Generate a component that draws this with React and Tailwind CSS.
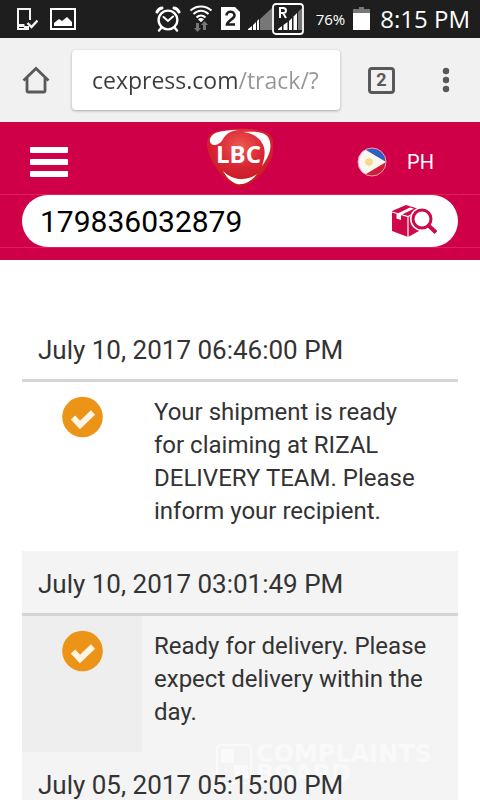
import { useState } from 'react';

const entries = [
    {
        date: 'July 10, 2017 06:46:00 PM',
        status: 'Your shipment is ready for claiming at RIZAL DELIVERY TEAM. Please inform your recipient.',
    },
    {
        date: 'July 10, 2017 03:01:49 PM',
        status: 'Ready for delivery. Please expect delivery within the day.',
        shaded: true,
    },
    {
        date: 'July 05, 2017 05:15:00 PM',
        shaded: true,
    },
];

function DeviceIcon() {
    return (
        <svg className="w-[22px] h-6" viewBox="0 0 22 24" fill="none" stroke="#f4f4f4">
            <path d="M14 13V2H2v20h11" strokeWidth="2" />
            <path d="M3 18.500h5.500" strokeWidth="3" />
            <path d="M8 20.500h5" strokeWidth="3" />
            <path d="M11.500 16l4 4 6-6.500" strokeWidth="2.400" />
        </svg>
    );
}

function PictureIcon() {
    return (
        <svg className="w-[26px] h-6" viewBox="0 0 26 24">
            <rect x="1" y="2" width="24" height="20" fill="none" stroke="#fff" strokeWidth="2" />
            <path d="M4 19v-3l5-4 3 2 5-4 5 5v4z" fill="#fff" />
        </svg>
    );
}

function AlarmIcon() {
    return (
        <svg className="w-[26px] h-[26px]" viewBox="0 0 26 26" fill="none" stroke="#fff" strokeLinecap="round">
            <circle cx="13" cy="14" r="9.4" strokeWidth="2.4" />
            <path d="M8.500 11l4.500 4 5-4.500" strokeWidth="2" />
            <path d="M2 6c1-2 2.500-3.500 5-4M24 6c-1-2-2.500-3.500-5-4" strokeWidth="3" />
            <path d="M6.500 21.500L4 24.500M19.500 21.500l2.500 3" strokeWidth="2.400" />
        </svg>
    );
}

function WifiIcon() {
    return (
        <svg className="w-6 h-7" viewBox="0 0 24 28">
            <g fill="none" stroke="#fff" strokeWidth="2">
                <path d="M1.500 5.500c6-5.500 15-5.500 21 0" />
                <path d="M4.500 9c4.500-4.300 10.500-4.300 15 0" />
                <path d="M7.500 12.500c2.700-2.600 6.300-2.600 9 0" />
            </g>
            <path d="M9 14.200c2-1.600 4-1.600 6 0l-3 3z" fill="#fff" />
            <path d="M7 18h3v5h2l-3.500 4L5 23h2zM14 25v-5h-2l3.500-4 3.500 4h-2v5z" fill="#777" />
        </svg>
    );
}

function SimIcon() {
    return (
        <svg className="w-[19px] h-6" viewBox="0 0 19 24">
            <path d="M0 0h14l5 5v18H0z" fill="#fff" />
            <path d="M5.500 8.500c0-5 8-5 8 0 0 3.500-7 5-7.500 9h8" fill="none" stroke="#1e1e1e" strokeWidth="2.600" />
        </svg>
    );
}

function SignalIcon() {
    return (
        <svg className="w-6 h-6" viewBox="0 0 24 24">
            <path d="M12 12L24 1v22H12z" fill="#777" />
            <path d="M0 23v-1l4-3v4zM5 23v-5l3-3v8zM9 23v-9l2-2v11z" fill="#fff" />
        </svg>
    );
}

function RoamingIcon() {
    return (
        <svg className="w-8 h-8" viewBox="0 0 32 32">
            <rect x="1" y="1" width="30" height="30" rx="3" fill="none" stroke="#fff" strokeWidth="1.800" />
            <path d="M8 15V5h3c4 0 4 5 0 5H8m3 0l3 5" fill="none" stroke="#fff" strokeWidth="2" />
            <path d="M6 27v-1l4-3v4zM11.500 27v-5l4-3v8zM17 27v-9l3-3v12zM21.500 27V13.500L25 10v17z" fill="#fff" />
            <path d="M26 27V9l4-4v22z" fill="#777" />
        </svg>
    );
}

function BatteryIcon() {
    return (
        <svg className="w-[17px] h-6" viewBox="0 0 17 24">
            <path d="M0 2h6V0h5v2h6v5H0z" fill="#777" />
            <path d="M0 6h17v17H0z" fill="#fff" />
        </svg>
    );
}

function StatusBar() {
    return (
        <div className="flex h-[38px] shrink-0 items-center bg-[#1e1e1e] pl-4 pr-2.5 text-white">
            <div className="flex items-center gap-3">
                <DeviceIcon />
                <PictureIcon />
            </div>
            <div className="ml-auto flex items-center gap-2">
                <div className="flex items-center gap-2">
                    <AlarmIcon />
                    <WifiIcon />
                    <SimIcon />
                </div>
                <div className="flex items-center">
                    <SignalIcon />
                    <RoamingIcon />
                </div>
                <span className="pl-1 font-['Open_Sans',sans-serif] text-[15px]">76%</span>
                <div className="flex items-center gap-2.5">
                    <BatteryIcon />
                    <span className="font-['Open_Sans',sans-serif] text-2xl whitespace-nowrap">8:15 PM</span>
                </div>
            </div>
        </div>
    );
}

function BrowserBar() {
    const [url, setUrl] = useState('cexpress.com/track/?');

    return (
        <div className="flex h-[84px] shrink-0 items-center bg-[#f1f1f1] pl-[22px] pr-5">
            <button aria-label="Home">
                <svg className="w-7 h-7" viewBox="0 0 28 28" fill="none" stroke="#595959" strokeWidth="2.800">
                    <path d="M1.500 14.500L14 2.500l12.500 12" />
                    <path d="M5 12v12.500q0 1.500 1.500 1.500h15q1.500 0 1.500-1.500V12" />
                </svg>
            </button>
            <input
                aria-label="Address"
                value={url}
                onChange={(e) => setUrl(e.target.value)}
                className="ml-[22px] h-[60px] min-w-0 flex-1 rounded-sm bg-white pl-5 pr-3 font-['Open_Sans',sans-serif] text-[23px] text-transparent shadow-[0_1px_3px_rgba(0,0,0,0.3)] outline-none [background:linear-gradient(to_right,#3c3c3c_166px,#969696_166px)_text,white]"
            />
            <button
                aria-label="Tabs"
                className="ml-7 flex h-[27px] w-[27px] items-center justify-center rounded-sm border-3 border-[#595959] font-[Roboto,sans-serif] text-lg font-bold text-[#595959]"
            >
                2
            </button>
            <button aria-label="More options" className="ml-[37px] flex w-7 justify-center">
                <svg className="w-2 h-7" viewBox="0 0 8 28" fill="#595959">
                    <circle cx="4" cy="5" r="3.200" />
                    <circle cx="4" cy="14" r="3.200" />
                    <circle cx="4" cy="23" r="3.200" />
                </svg>
            </button>
        </div>
    );
}

function Logo() {
    return (
        <svg className="w-[66px] h-[60px]" viewBox="0 0 66 60">
            <defs>
                <radialGradient id="shield" cx="0.5" cy="0.3" r="0.7">
                    <stop offset="0" stopColor="#ee5a50" />
                    <stop offset="0.5" stopColor="#d92636" />
                    <stop offset="1" stopColor="#c4161c" />
                </radialGradient>
            </defs>
            <path d="M3 7C12 0 50-2 62 6c8 6 5 21-1 31C53 50 41 59 32 59 19 57 1 33 0 17c0-4 1-8 3-10z" fill="url(#shield)" />
            <path d="M3 14C2 8 7 4 17 3c5-1 9-1 14-1-8 1-12 4-15 9-2 4-6 6-9 6-2 0-3-1-4-3z" fill="#fff" />
            <path d="M36 4c14-1 21 0 25 5 5 8 2 19-6 29 3-9 4-17 0-23C51 8 44 5 36 4z" fill="#fff" />
            <path d="M16 43c9 9 22 11 34 3-6 8-13 11-20 10-6-2-10-6-14-13z" fill="#fff" />
            <text x="9" y="35" fill="#fff" fontSize="24" fontWeight="700" fontFamily="'Open Sans', sans-serif">LBC</text>
        </svg>
    );
}

function Flag() {
    return (
        <svg className="w-[30px] h-[30px]" viewBox="0 0 30 30">
            <defs>
                <clipPath id="round">
                    <circle cx="15" cy="15" r="14" />
                </clipPath>
            </defs>
            <g clipPath="url(#round)">
                <path d="M0 0h30v15H0z" fill="#2e5fc0" />
                <path d="M0 15h30v15H0z" fill="#cc1f35" />
                <path d="M0 2L4 0l25 15L4 30l-4-2z" fill="#fbf8f2" />
                <circle cx="12" cy="15" r="3.500" fill="#f3d27c" />
                <path d="M12 10v10M7 15h10M8.500 11.500l7 7M15.500 11.500l-7 7" stroke="#f5dea0" strokeWidth="0.800" />
            </g>
            <circle cx="15" cy="15" r="14" fill="none" stroke="#ef9fb5" strokeWidth="1" />
        </svg>
    );
}

function TrackIcon() {
    return (
        <svg className="w-[46px] h-8" viewBox="0 0 46 32">
            <path d="M0 6L14 0l13 4v22L16 32 0 26z" fill="#cf0849" />
            <path d="M0 7l16 4.500L27 6M16 11.500V32" fill="none" stroke="#fff" strokeWidth="1.200" />
            <path d="M4.500 9L18 2.500l4 1.300L9 10v5l-4.500-1.500z" fill="#fff" />
            <path d="M5 7.500L16.500 2" stroke="#cf0849" strokeWidth="1" />
            <circle cx="30" cy="14" r="12" fill="#fff" />
            <circle cx="30" cy="14" r="9" fill="#fff" stroke="#cf0849" strokeWidth="3" />
            <path d="M36.500 20.500l7.500 7" stroke="#cf0849" strokeWidth="4" />
        </svg>
    );
}

function SiteHeader() {
    const [tracking, setTracking] = useState('179836032879');

    return (
        <header className="shrink-0 bg-[#d00048] pb-3">
            <div className="grid h-[72px] grid-cols-[1fr_auto_1fr] items-center px-[30px]">
                <button aria-label="Menu" className="mt-2 flex w-[38px] flex-col gap-1.5">
                    <span className="h-1.5 w-full rounded-[1px] bg-white"></span>
                    <span className="h-1.5 w-full rounded-[1px] bg-white"></span>
                    <span className="h-1.5 w-full rounded-[1px] bg-white"></span>
                </button>
                <a href="#home" aria-label="LBC">
                    <Logo />
                </a>
                <a href="#country" className="mt-2 mr-4 flex items-center gap-5 justify-self-end text-xl text-white">
                    <Flag />
                    PH
                </a>
            </div>
            <div className="border-y border-[#de1f5f] px-[22px]">
                <form onSubmit={(e) => e.preventDefault()} className="flex h-[52px] items-center rounded-full bg-white pl-[18px] pr-5">
                    <input
                        aria-label="Tracking number"
                        value={tracking}
                        onChange={(e) => setTracking(e.target.value)}
                        className="min-w-0 flex-1 text-[30px] text-black outline-none"
                    />
                    <button aria-label="Track">
                        <TrackIcon />
                    </button>
                </form>
            </div>
        </header>
    );
}

function CheckIcon() {
    return (
        <svg className="mx-auto w-[42px] h-[42px]" viewBox="0 0 42 42">
            <circle cx="21.500" cy="21" r="20.300" fill="#ec9418" />
            <path d="M12 21.500l7 7.500 13-12.500" fill="none" stroke="#fff5e6" strokeWidth="6" />
        </svg>
    );
}

function TrackingTable() {
    return (
        <table className="w-full table-fixed border-collapse text-left text-[#333]">
            <colgroup>
                <col className="w-[120px]" />
                <col />
            </colgroup>
            {entries.map((entry) => (
                <tbody key={entry.date} className={entry.shaded ? 'bg-[#f4f4f4]' : 'bg-white'}>
                    <tr>
                        <th colSpan={2} scope="rowgroup" className="p-0 font-normal">
                            <div className="relative z-10 border-b-3 border-[#d5d5d5] pt-[17px] pb-[13px] pl-4 text-[26px] leading-8">{entry.date}</div>
                        </th>
                    </tr>
                    {entry.status && (
                        <tr>
                            <td className={entry.shaded ? 'bg-[#eee] pt-[14px] align-top' : 'pt-[14px] align-top'}>
                                <CheckIcon />
                            </td>
                            <td className="pt-[14px] pr-7 pb-[23px] pl-3 align-top text-2xl leading-[33px]">{entry.status}</td>
                        </tr>
                    )}
                </tbody>
            ))}
        </table>
    );
}

function Watermark() {
    return (
        <div className="pointer-events-none absolute right-12 bottom-4 flex items-start gap-1 text-white/50">
            <svg className="w-9 h-10" viewBox="0 0 36 40">
                <rect x="1" y="1" width="34" height="38" rx="4" fill="none" stroke="currentColor" strokeWidth="2" />
                <path d="M5 5h13v14H5zM18 21h14v14H18z" fill="currentColor" />
            </svg>
            <p className="font-['DejaVu_Sans',sans-serif] text-2xl leading-5 font-bold">
                COMPLAINTS
                <br />
                BOARD
            </p>
        </div>
    );
}

export default function App() {
    return (
        <div className="relative flex h-screen flex-col overflow-hidden bg-white font-[Roboto,sans-serif]">
            <StatusBar />
            <BrowserBar />
            <SiteHeader />
            <main className="min-h-0 flex-1 overflow-hidden px-[22px] pt-[57px]">
                <TrackingTable />
            </main>
            <Watermark />
        </div>
    );
}
